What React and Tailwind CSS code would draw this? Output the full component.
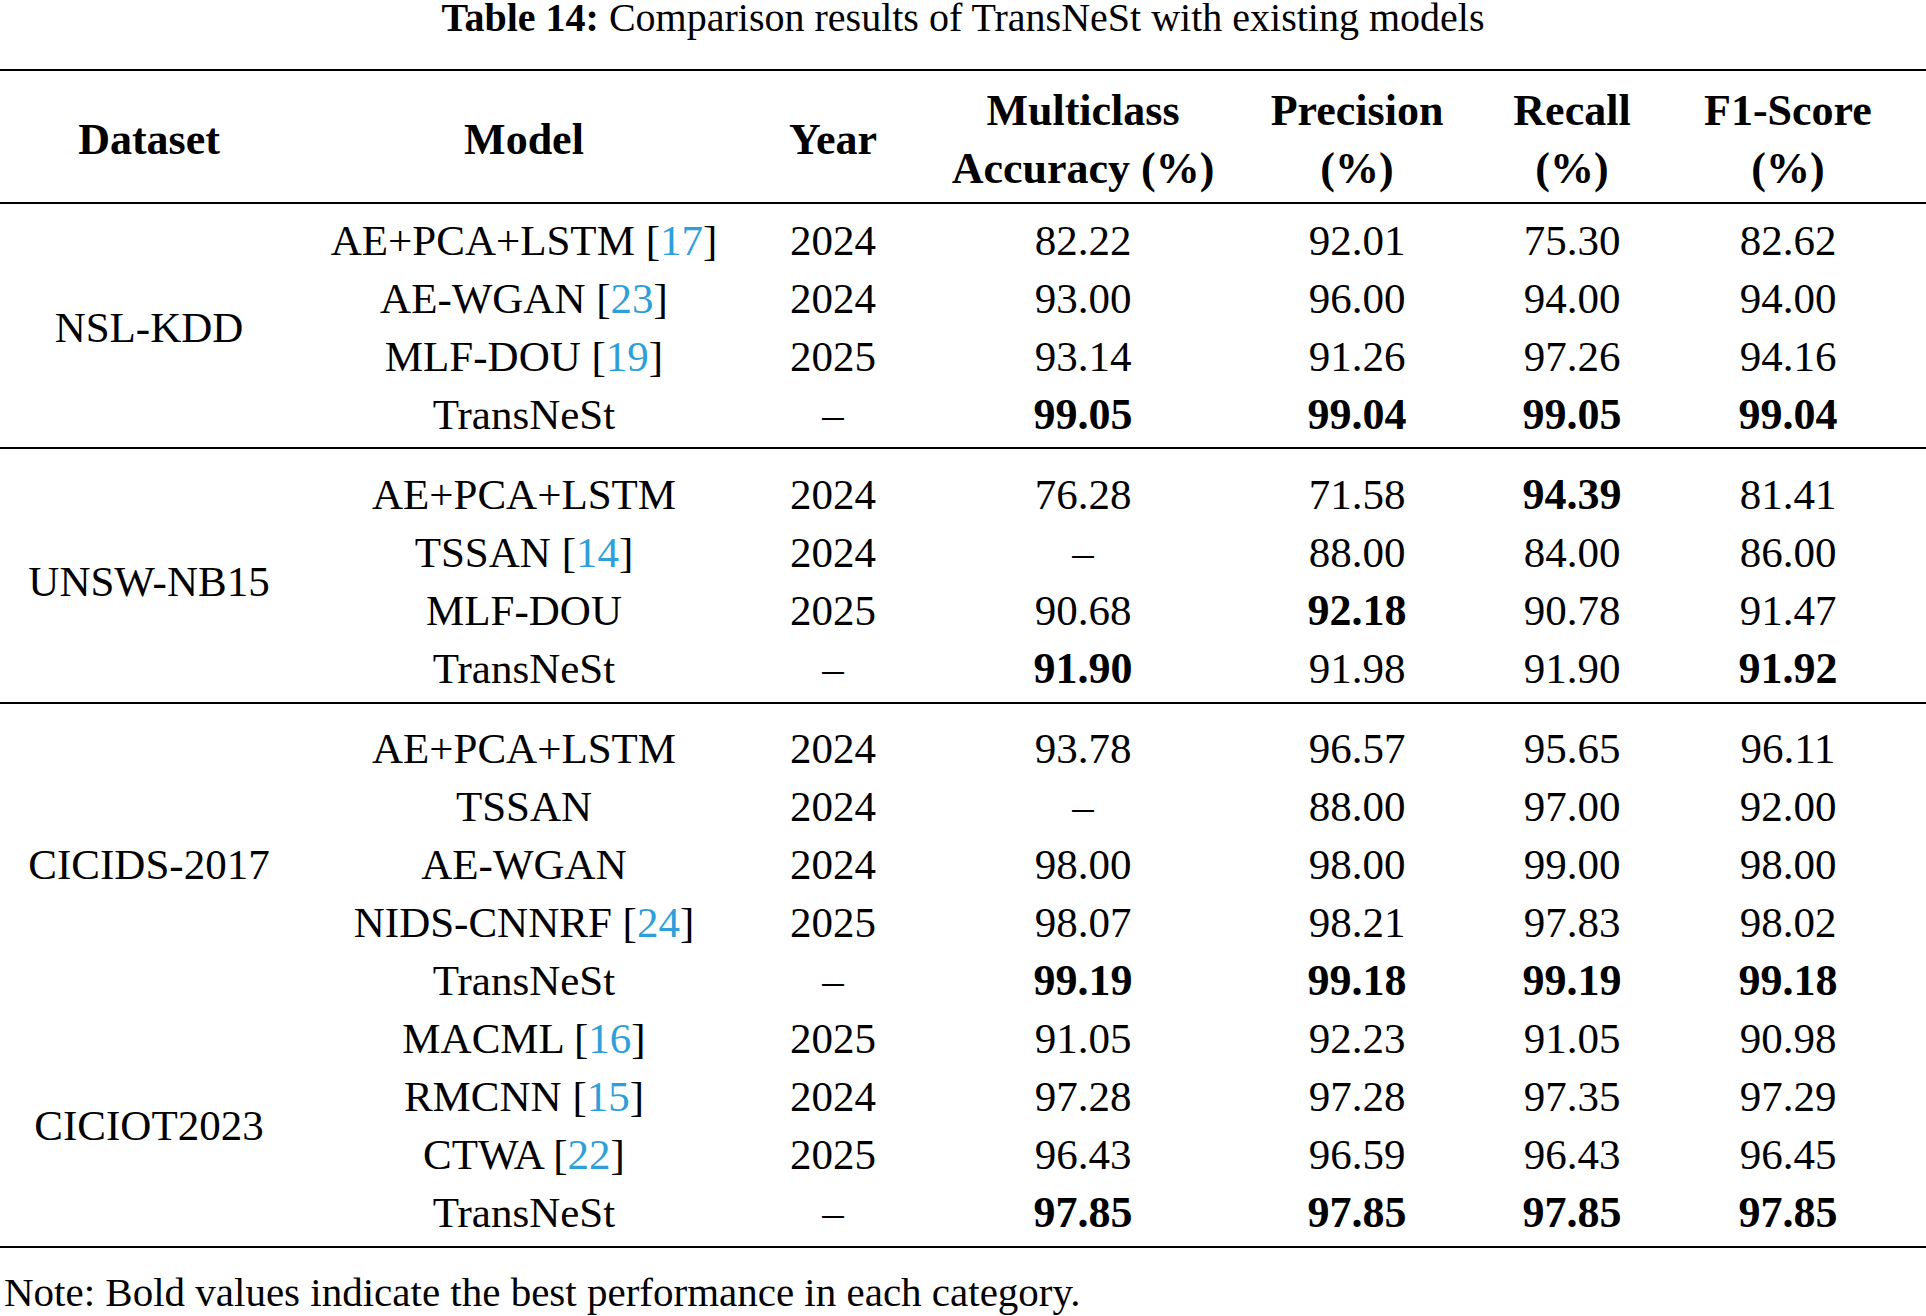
import React from "react";

const cols = "grid grid-cols-[298px_452px_166px_334px_214px_216px_216px]";
const span = { 4: "row-span-4", 5: "row-span-5" };

// "!" in front of a value marks it bold
const groups = [
  {
    name: "NSL-KDD",
    pad: "pt-[8px] pb-[3px] border-b-2 border-black",
    rows: [
      ["AE+PCA+LSTM", "17", "2024", "82.22", "92.01", "75.30", "82.62"],
      ["AE-WGAN", "23", "2024", "93.00", "96.00", "94.00", "94.00"],
      ["MLF-DOU", "19", "2025", "93.14", "91.26", "97.26", "94.16"],
      ["TransNeSt", "", "–", "!99.05", "!99.04", "!99.05", "!99.04"],
    ],
  },
  {
    name: "UNSW-NB15",
    pad: "pt-[17px] pb-[4px] border-b-2 border-black",
    rows: [
      ["AE+PCA+LSTM", "", "2024", "76.28", "71.58", "!94.39", "81.41"],
      ["TSSAN", "14", "2024", "–", "88.00", "84.00", "86.00"],
      ["MLF-DOU", "", "2025", "90.68", "!92.18", "90.78", "91.47"],
      ["TransNeSt", "", "–", "!91.90", "91.98", "91.90", "!91.92"],
    ],
  },
  {
    name: "CICIDS-2017",
    pad: "pt-[16px]",
    rows: [
      ["AE+PCA+LSTM", "", "2024", "93.78", "96.57", "95.65", "96.11"],
      ["TSSAN", "", "2024", "–", "88.00", "97.00", "92.00"],
      ["AE-WGAN", "", "2024", "98.00", "98.00", "99.00", "98.00"],
      ["NIDS-CNNRF", "24", "2025", "98.07", "98.21", "97.83", "98.02"],
      ["TransNeSt", "", "–", "!99.19", "!99.18", "!99.19", "!99.18"],
    ],
  },
  {
    name: "CICIOT2023",
    pad: "pb-[4px] border-b-2 border-black",
    rows: [
      ["MACML", "16", "2025", "91.05", "92.23", "91.05", "90.98"],
      ["RMCNN", "15", "2024", "97.28", "97.28", "97.35", "97.29"],
      ["CTWA", "22", "2025", "96.43", "96.59", "96.43", "96.45"],
      ["TransNeSt", "", "–", "!97.85", "!97.85", "!97.85", "!97.85"],
    ],
  },
];

const cell = "h-[58px] leading-[58px] text-center whitespace-nowrap";

const Value = ({ v }) =>
  v.startsWith("!") ? (
    <div className={`${cell} font-bold text-[44px]`}>{v.slice(1)}</div>
  ) : (
    <div className={cell}>{v}</div>
  );

const Group = ({ g }) => (
  <div className={`${cols} ${g.pad}`}>
    <div className={`${span[g.rows.length]} self-center text-center leading-[58px]`}>
      {g.name}
    </div>
    {g.rows.map((r, i) => (
      <React.Fragment key={i}>
        <div className={cell}>
          {r[0]}
          {r[1] && (
            <>
              {" "}[<span className="text-[#2e9fd9]">{r[1]}</span>]
            </>
          )}
        </div>
        <div className={cell}>{r[2]}</div>
        {r.slice(3).map((v, j) => (
          <Value key={j} v={v} />
        ))}
      </React.Fragment>
    ))}
  </div>
);

const Head = ({ lines }) => (
  <div className="flex flex-col items-center justify-center font-bold text-[44px] leading-[58px]">
    {lines.map((l) => (
      <span key={l} className="whitespace-nowrap">{l}</span>
    ))}
  </div>
);

export default function App() {
  return (
    <div className="w-[1926px] h-[1316px] bg-white text-black overflow-hidden font-['Liberation_Serif',serif] text-[43px]">
      <div className="h-[69px] text-center text-[40px] leading-[36px] whitespace-nowrap">
        <span className="font-bold">Table 14:</span> Comparison results of TransNeSt with existing models
      </div>
      <div className={`${cols} h-[135px] pt-[6px] border-y-2 border-black`}>
        <Head lines={["Dataset"]} />
        <Head lines={["Model"]} />
        <Head lines={["Year"]} />
        <Head lines={["Multiclass", "Accuracy (%)"]} />
        <Head lines={["Precision", "(%)"]} />
        <Head lines={["Recall", "(%)"]} />
        <Head lines={["F1-Score", "(%)"]} />
      </div>
      {groups.map((g) => (
        <Group key={g.name} g={g} />
      ))}
      <div className="mt-[15px] leading-[58px] text-[41px] whitespace-nowrap pl-[4px]">
        Note: Bold values indicate the best performance in each category.
      </div>
    </div>
  );
}
